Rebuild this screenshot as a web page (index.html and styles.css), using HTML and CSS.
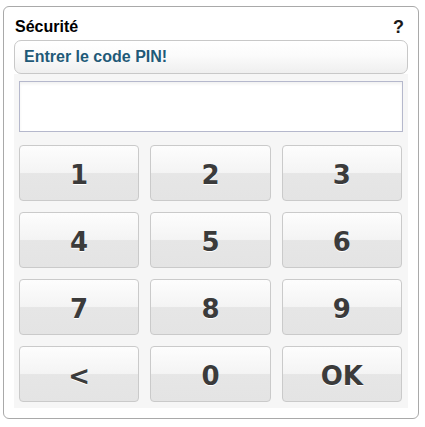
FILE: index.html
```html
<!DOCTYPE html>
<html lang="fr">
<head>
<meta charset="utf-8">
<title>Sécurité</title>
<link rel="stylesheet" href="styles.css">
</head>
<body>
<div class="panel">
  <div class="title-row">
    <span class="title">Sécurité</span>
    <span class="help">?</span>
  </div>
  <div class="bar">Entrer le code PIN!</div>
  <div class="content">
    <div class="pin-input"></div>
    <div class="keypad">
      <button class="key">1</button>
      <button class="key">2</button>
      <button class="key">3</button>
      <button class="key">4</button>
      <button class="key">5</button>
      <button class="key">6</button>
      <button class="key">7</button>
      <button class="key">8</button>
      <button class="key">9</button>
      <button class="key">&lt;</button>
      <button class="key">0</button>
      <button class="key">OK</button>
    </div>
  </div>
</div>
</body>
</html>
```
FILE: styles.css
```css
html, body {
  margin: 0;
  padding: 0;
  background: #ffffff;
}
body {
  padding: 6px 0 0 3px;
  font-family: "Liberation Sans", Arial, sans-serif;
}
.panel {
  box-sizing: border-box;
  width: 416px;
  height: 413px;
  border: 1px solid #a9a9a9;
  border-radius: 6px;
  background: #ffffff;
  padding: 11px 10px 0 10px;
}
.title-row {
  display: flex;
  justify-content: space-between;
  align-items: flex-start;
  height: 18px;
  line-height: 18px;
  margin-bottom: 4px;
}
.title {
  font-weight: bold;
  font-size: 16px;
  color: #000000;
  padding-left: 1px;
}
.help {
  font-weight: bold;
  font-size: 18px;
  color: #1a1a1a;
  margin-right: 4px;
}
.bar {
  box-sizing: border-box;
  height: 34px;
  border: 1px solid #c8c8c8;
  border-radius: 7px;
  background: linear-gradient(#ffffff 0%, #fbfbfb 45%, #efefef 100%);
  padding: 7px 0 0 9px;
  font-weight: bold;
  font-size: 16px;
  line-height: 18px;
  color: #1f5a78;
}
.content {
  box-sizing: border-box;
  width: 394px;
  height: 334px;
  background: #f6f6f6;
  padding: 7px 5px 0 5px;
}
.pin-input {
  box-sizing: border-box;
  width: 384px;
  height: 51px;
  border: 1px solid #b5b8cc;
  background: #ffffff;
  box-shadow: inset 0 2px 3px rgba(0,0,0,0.06);
}
.keypad {
  margin-top: 13px;
  width: 383px;
  display: grid;
  grid-template-columns: 1fr 1fr 1fr;
  grid-auto-rows: 56px;
  column-gap: 11px;
  row-gap: 11px;
}
.key {
  box-sizing: border-box;
  border: 1px solid #cacaca;
  border-radius: 4px;
  background: linear-gradient(#fdfdfd 0%, #f4f4f4 49%, #e6e6e6 51%, #e4e4e4 100%);
  font-family: "DejaVu Sans", Verdana, sans-serif;
  font-weight: bold;
  font-size: 26px;
  color: #3b3b3b;
  text-shadow: 0 1px 0 #ffffff;
  padding: 4px 0 0 0;
  margin: 0;
  line-height: 1;
}
```
